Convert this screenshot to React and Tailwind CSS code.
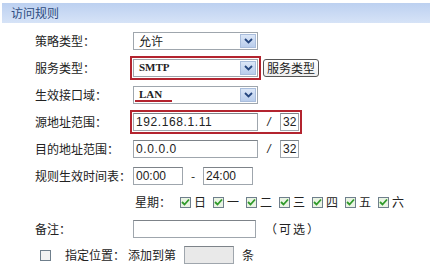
import React from 'react';

const cjk = { fontFamily: '"Noto Sans CJK SC", "Noto Sans", sans-serif' };

const Row = ({ label, children }) => (
   <div className="flex items-center h-[27px]">
      <div className="w-[133px] shrink-0 pl-[35px] whitespace-nowrap">{label}</div>
      {children}
   </div>
);

const Arrow = () => (
   <div className="absolute right-[1px] top-[1px] bottom-[1px] w-[16px] flex items-center justify-center bg-gradient-to-b from-[#dbe6f7] to-[#b9cdec] border border-[#a9bddc]">
      <svg width="9" height="6" viewBox="0 0 9 6">
         <path d="M1 1 L4.5 4.5 L8 1" stroke="#24457e" strokeWidth="1.8" fill="none" />
      </svg>
   </div>
);

const Select = ({ value, latin, underline }) => (
   <div className="relative w-[125px] h-[18px] border border-[#9fa6ad] bg-white flex items-center pl-[5px]">
      <span
         className={latin ? 'text-[11px] font-bold text-[#222]' : 'text-[12px]'}
         style={latin ? { fontFamily: '"Liberation Serif", serif' } : undefined}
      >
         {value}
      </span>
      <Arrow />
      {underline && <div className="absolute left-[1px] bottom-[1px] w-[37px] h-[2px] bg-[#b3242f]" />}
   </div>
);

const Input = ({ value, w, bg }) => (
   <div
      className={`h-[18px] border border-[#9fa6ad] border-t-[#7d8389] flex items-center pl-[2px] text-[12px] text-[#222] ${bg || 'bg-white'}`}
      style={{ width: w, fontFamily: '"Liberation Sans", Arial, sans-serif' }}
   >
      {value}
   </div>
);

const Check = ({ checked }) => (
   <div className={`w-[11px] h-[11px] border border-[#6f7f8c] flex items-center justify-center ${checked ? 'bg-[#eaf4e4]' : 'bg-[#f2f2f2]'}`}>
      {checked && (
         <svg width="9" height="8" viewBox="0 0 9 8">
            <path d="M1 4 L3.5 6.5 L8 1.5" stroke="#2f9a2a" strokeWidth="1.8" fill="none" />
         </svg>
      )}
   </div>
);

const days = ['日', '一', '二', '三', '四', '五', '六'];

export default function App() {
   return (
      <div className="w-[430px] h-[267px] overflow-hidden bg-white pt-[3px] text-[12px] text-[#222]" style={cjk}>
         <div className="ml-[2px] h-[20px] flex items-center pl-[9px] bg-gradient-to-b from-[#bcd0f0] to-[#d6e3f7] text-[#2d4b80] text-[12px]">
            访问规则
         </div>

         <div className="mt-[4px]">
            <Row label="策略类型：">
               <Select value="允许" />
            </Row>

            <Row label="服务类型：">
               <div className="-ml-[3px] border-2 border-[#b3242f] p-[1px]">
                  <Select value="SMTP" latin />
               </div>
               <button className="ml-[2px] h-[18px] px-[3px] border border-[#555] rounded-[3px] bg-gradient-to-b from-white to-[#eeeeee] text-[12px] leading-none text-[#222]">
                  服务类型
               </button>
            </Row>

            <Row label="生效接口域：">
               <Select value="LAN" latin underline />
            </Row>

            <Row label="源地址范围：">
               <div className="-ml-[3px] flex items-center border-2 border-[#b3242f] p-[1px] pr-[1px]">
                  <Input value={<span className="tracking-[0.6px]">192.168.1.11</span>} w={125} />
                  <span className="w-[22px] text-center italic" style={{ fontFamily: '"Liberation Sans", sans-serif' }}>/</span>
                  <Input value="32" w={19} />
               </div>
            </Row>

            <Row label="目的地址范围：">
               <Input value={<span className="tracking-[0.6px]">0.0.0.0</span>} w={125} />
               <span className="w-[22px] text-center italic" style={{ fontFamily: '"Liberation Sans", sans-serif' }}>/</span>
               <Input value="32" w={19} />
            </Row>

            <Row label="规则生效时间表：">
               <Input value="00:00" w={50} />
               <span className="w-[20px] text-center">-</span>
               <Input value="24:00" w={50} />
            </Row>

            <div className="flex items-center h-[26px] pl-[135px]">
               <span className="mr-[9px]">星期：</span>
               {days.map(d => (
                  <div key={d} className="flex items-center w-[33px]">
                     <Check checked />
                     <span className="ml-[3px]">{d}</span>
                  </div>
               ))}
            </div>

            <Row label="备注：">
               <Input value="" w={123} />
               <span className="ml-[9px] tracking-[2px]">（可选）</span>
            </Row>

            <div className="flex items-center h-[26px] pl-[40px]">
               <Check />
               <span className="ml-[14px]">指定位置：</span>
               <span className="ml-[3px] mr-[8px]">添加到第</span>
               <Input value="" w={50} bg="bg-[#e9e9e9]" />
               <span className="ml-[8px]">条</span>
            </div>
         </div>
      </div>
   );
}
